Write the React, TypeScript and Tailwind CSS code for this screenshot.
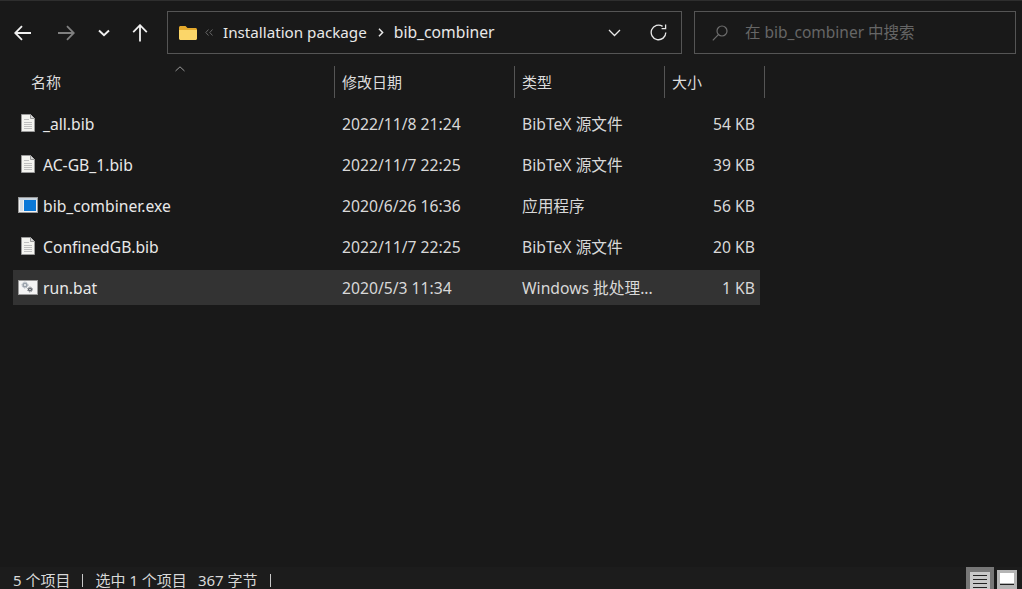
const files = [
  { name: '_all.bib', date: '2022/11/8 21:24', type: 'BibTeX 源文件', size: '54 KB', icon: 'doc' },
  { name: 'AC-GB_1.bib', date: '2022/11/7 22:25', type: 'BibTeX 源文件', size: '39 KB', icon: 'doc' },
  { name: 'bib_combiner.exe', date: '2020/6/26 16:36', type: '应用程序', size: '56 KB', icon: 'exe' },
  { name: 'ConfinedGB.bib', date: '2022/11/7 22:25', type: 'BibTeX 源文件', size: '20 KB', icon: 'doc' },
  { name: 'run.bat', date: '2020/5/3 11:34', type: 'Windows 批处理...', size: '1 KB', icon: 'bat', selected: true }
];

const font = { fontFamily: '"Noto Sans", "Noto Sans CJK SC", sans-serif' };

function DocIcon() {
  return (
    <svg width="14" height="18" viewBox="0 0 14 18">
      <path d="M0.5 0.5H9.5L13.5 4.5V17.5H0.5Z" fill="#f4f4f0" stroke="#9a9a9a" />
      <path d="M9.5 0.5V4.5H13.5" fill="#d8d8d8" stroke="#9a9a9a" />
      <path d="M3 5.5H8M3 8.5H11M3 10.5H11M3 12.5H11M3 14.5H11" stroke="#c0c0c0" />
    </svg>
  );
}

function ExeIcon() {
  return (
    <svg width="20" height="16" viewBox="0 0 20 16">
      <rect x="0.5" y="0.5" width="19" height="15" fill="#f2f2f2" stroke="#9a9a9a" />
      <rect x="1" y="1" width="18" height="2" fill="#c9d6e2" />
      <rect x="2" y="3" width="3" height="11" fill="#d5dde3" />
      <rect x="6" y="3" width="12" height="11" fill="#0a78d7" />
    </svg>
  );
}

function BatIcon() {
  return (
    <svg width="20" height="15" viewBox="0 0 20 15">
      <rect x="0.5" y="0.5" width="19" height="14" fill="#f4f4f4" stroke="#9a9a9a" />
      <circle cx="7" cy="5" r="1.8" fill="#f4f4f4" stroke="#9aa2ab" strokeWidth="1.6" />
      <circle cx="7" cy="5" r="3" fill="none" stroke="#9aa2ab" strokeWidth="0.9" strokeDasharray="1.1 1.1" />
      <circle cx="12" cy="9.5" r="1.4" fill="#f4f4f4" stroke="#5f646b" strokeWidth="1.4" />
      <circle cx="12" cy="9.5" r="2.5" fill="none" stroke="#5f646b" strokeWidth="0.8" strokeDasharray="1 1" />
    </svg>
  );
}

function FileIcon({ kind }: { kind: string }) {
  if (kind === 'exe') return <ExeIcon />;
  if (kind === 'bat') return <BatIcon />;
  return <DocIcon />;
}

function Toolbar() {
  return (
    <div className="flex h-[43px] items-center pl-[14px] pr-[6px]">
      <svg width="18" height="16" viewBox="0 0 18 16" fill="none" stroke="#f0f0f0" strokeWidth="1.8">
        <path d="M17 8H1.5M8 1.2L1.2 8L8 14.8" />
      </svg>
      <svg className="ml-[25px]" width="18" height="16" viewBox="0 0 18 16" fill="none" stroke="#808080" strokeWidth="1.8">
        <path d="M1 8H16.5M10 1.2L16.8 8L10 14.8" />
      </svg>
      <svg className="ml-[23px]" width="12" height="8" viewBox="0 0 12 8" fill="none" stroke="#f0f0f0" strokeWidth="1.9">
        <path d="M1 1.5L6 6.3L11 1.5" />
      </svg>
      <svg className="ml-[22px]" width="16" height="18" viewBox="0 0 16 18" fill="none" stroke="#f0f0f0" strokeWidth="1.8">
        <path d="M8 17.5V1.5M1.2 8.2L8 1.2L14.8 8.2" />
      </svg>
      <div className="ml-[19px] flex h-[43px] w-[515px] items-center border border-[#555555] pl-[11px]">
        <svg width="18" height="14" viewBox="0 0 18 14">
          <path d="M0 1.5C0 0.7 0.7 0 1.5 0H6.5L8.5 2H16.5C17.3 2 18 2.7 18 3.5V4H0Z" fill="#e4a92c" />
          <path d="M0 4H18V12.5C18 13.3 17.3 14 16.5 14H1.5C0.7 14 0 13.3 0 12.5Z" fill="#fbd669" />
        </svg>
        <svg className="ml-[8px]" width="8" height="7" viewBox="0 0 8 7" fill="none" stroke="#666" strokeWidth="1">
          <path d="M3.5 0.5L0.8 3.5L3.5 6.5M7.5 0.5L4.8 3.5L7.5 6.5" />
        </svg>
        <span className="ml-[10px] text-[15.2px] text-[#e8e8e8]">Installation package</span>
        <svg className="ml-[11px]" width="6" height="9" viewBox="0 0 6 9" fill="none" stroke="#e8e8e8" strokeWidth="1.5">
          <path d="M1 0.8L4.6 4.5L1 8.2" />
        </svg>
        <span className="ml-[10px] text-[15.7px] text-[#e8e8e8]">bib_combiner</span>
        <svg className="ml-auto" width="13" height="8" viewBox="0 0 13 8" fill="none" stroke="#e8e8e8" strokeWidth="1.3">
          <path d="M1 1L6.5 6.5L12 1" />
        </svg>
        <svg className="ml-[29px] mr-[14px]" width="17" height="17" viewBox="0 0 17 17" fill="none" stroke="#e8e8e8" strokeWidth="1.3">
          <path d="M15.8 8.5A7.3 7.3 0 1 1 12.6 2.4" />
          <path d="M15.6 0.6V4.6H11.6" />
        </svg>
      </div>
      <div className="ml-[12px] flex h-[43px] w-[322px] items-center border border-[#555555] pl-[17px]">
        <svg width="16" height="16" viewBox="0 0 16 16" fill="none" stroke="#6e6e6e" strokeWidth="1.2">
          <circle cx="10" cy="6" r="5" />
          <path d="M6.4 9.6L0.8 15.4" />
        </svg>
        <span className="ml-[17px] text-[15.5px] text-[#666666]">在 bib_combiner 中搜索</span>
      </div>
    </div>
  );
}

function HeaderCell({ label, width, pad }: { label: string; width: string; pad: string }) {
  return (
    <div className={`flex h-[32px] items-center border-r border-[#555555] pt-[1px] text-[15px] text-[#dcdcdc] ${width} ${pad}`}>
      {label}
    </div>
  );
}

function ColumnHeader() {
  return (
    <div className="relative mt-[12px] flex pl-[13px]">
      <HeaderCell label="名称" width="w-[322px]" pad="pl-[18px]" />
      <HeaderCell label="修改日期" width="w-[180px]" pad="pl-[7px]" />
      <HeaderCell label="类型" width="w-[150px]" pad="pl-[7px]" />
      <HeaderCell label="大小" width="w-[100px]" pad="pl-[7px]" />
      <svg className="absolute left-[175px] top-0" width="10" height="6" viewBox="0 0 10 6" fill="none" stroke="#9a9a9a">
        <path d="M0.5 5L5 0.8L9.5 5" />
      </svg>
    </div>
  );
}

function FileRow({ file }: { file: (typeof files)[number] }) {
  return (
    <div
      className={`grid h-[35px] w-[747px] grid-cols-[321px_180px_150px_96px] items-center text-[15.7px] text-[#e8e8e8] ${file.selected ? 'bg-[#333333]' : ''}`}
    >
      <div className="flex items-center">
        <div className="flex w-[30px] justify-center">
          <FileIcon kind={file.icon} />
        </div>
        <span className="pt-[2px]">{file.name}</span>
      </div>
      <div className="pl-[8px] pt-[2px] text-[#d8d8d8]">{file.date}</div>
      <div className="pl-[8px] pt-[2px] text-[#d8d8d8]">{file.type}</div>
      <div className="pr-[5px] pt-[2px] text-right text-[#d8d8d8]">{file.size}</div>
    </div>
  );
}

function StatusBar() {
  return (
    <div className="flex h-[22px] items-end justify-between bg-[#1c1c1c] pl-[13px] text-[15px] leading-[15px] text-[#d8d8d8]">
      <div className="flex h-[22px] items-center whitespace-pre pt-[5px]">
        <span>5 个项目</span>
        <span className="mx-[12px] h-[13px] w-px bg-[#c8c8c8]" />
        <span>选中 1 个项目</span>
        <span className="ml-[11px]">367 字节</span>
        <span className="ml-[12px] h-[13px] w-px bg-[#c8c8c8]" />
      </div>
      <div className="flex h-[22px] items-start">
        <div className="flex h-[22px] w-[28px] justify-center bg-[#777777] pt-[5px]">
          <div className="flex h-[17px] w-[20px] flex-col gap-[3px] bg-[#c8c8c8] px-[3px] pt-[3px]">
            <div className="h-px bg-[#222222]" />
            <div className="h-px bg-[#222222]" />
            <div className="h-px bg-[#222222]" />
            <div className="h-px bg-[#222222]" />
          </div>
        </div>
        <div className="ml-[3px] mr-[5px] mt-[3px] flex h-[19px] w-[20px] flex-col bg-[#b5b5b5] p-[3px]">
          <div className="h-[10px] bg-white" />
          <div className="mt-px h-px bg-[#222222]" />
        </div>
      </div>
    </div>
  );
}

export default function App() {
  return (
    <div className="flex h-[589px] w-[1022px] flex-col overflow-hidden border-t border-[#2e2e2e] bg-[#191919]" style={font}>
      <div className="flex-1 pt-[10px]">
        <Toolbar />
        <ColumnHeader />
        <div className="mt-[8px] flex flex-col gap-[6px] pl-[13px]">
          {files.map((file) => (
            <FileRow key={file.name} file={file} />
          ))}
        </div>
      </div>
      <StatusBar />
    </div>
  );
}
